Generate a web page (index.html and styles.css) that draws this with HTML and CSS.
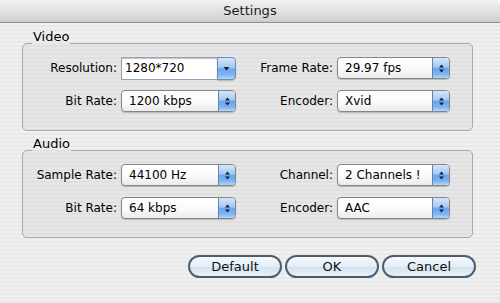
FILE: index.html
```html
<!DOCTYPE html>
<html lang="en">
<head>
  <meta charset="UTF-8">
  <meta name="viewport" content="width=device-width, initial-scale=1.0">
  <title>Settings</title>
  <link rel="stylesheet" href="styles.css">
</head>
<body>
  <div class="window">
    <div class="titlebar">Settings</div>
    <div class="content">
      <fieldset class="group">
        <legend>Video</legend>
        <div class="grid">
          <label class="field-label">Resolution:</label>
          <div class="combo">
            <span class="combo-text">1280*720</span>
            <span class="combo-btn"><svg width="7" height="11" viewBox="0 0 7 11"><polygon points="0.5,4 6.5,4 3.5,7.5" fill="#15203a"/></svg></span>
          </div>
          <label class="field-label">Frame Rate:</label>
          <div class="popup">
            <span class="popup-text">29.97 fps</span>
            <span class="popup-btn"><svg width="7" height="11" viewBox="0 0 7 11"><polygon points="1,4.5 6,4.5 3.5,1.5" fill="#15203a"/><polygon points="1,6.5 6,6.5 3.5,9.5" fill="#15203a"/></svg></span>
          </div>
          <label class="field-label">Bit Rate:</label>
          <div class="popup">
            <span class="popup-text">1200 kbps</span>
            <span class="popup-btn"><svg width="7" height="11" viewBox="0 0 7 11"><polygon points="1,4.5 6,4.5 3.5,1.5" fill="#15203a"/><polygon points="1,6.5 6,6.5 3.5,9.5" fill="#15203a"/></svg></span>
          </div>
          <label class="field-label">Encoder:</label>
          <div class="popup">
            <span class="popup-text">Xvid</span>
            <span class="popup-btn"><svg width="7" height="11" viewBox="0 0 7 11"><polygon points="1,4.5 6,4.5 3.5,1.5" fill="#15203a"/><polygon points="1,6.5 6,6.5 3.5,9.5" fill="#15203a"/></svg></span>
          </div>
        </div>
      </fieldset>
      <fieldset class="group">
        <legend>Audio</legend>
        <div class="grid">
          <label class="field-label">Sample Rate:</label>
          <div class="popup">
            <span class="popup-text">44100 Hz</span>
            <span class="popup-btn"><svg width="7" height="11" viewBox="0 0 7 11"><polygon points="1,4.5 6,4.5 3.5,1.5" fill="#15203a"/><polygon points="1,6.5 6,6.5 3.5,9.5" fill="#15203a"/></svg></span>
          </div>
          <label class="field-label">Channel:</label>
          <div class="popup">
            <span class="popup-text">2 Channels !</span>
            <span class="popup-btn"><svg width="7" height="11" viewBox="0 0 7 11"><polygon points="1,4.5 6,4.5 3.5,1.5" fill="#15203a"/><polygon points="1,6.5 6,6.5 3.5,9.5" fill="#15203a"/></svg></span>
          </div>
          <label class="field-label">Bit Rate:</label>
          <div class="popup">
            <span class="popup-text">64 kbps</span>
            <span class="popup-btn"><svg width="7" height="11" viewBox="0 0 7 11"><polygon points="1,4.5 6,4.5 3.5,1.5" fill="#15203a"/><polygon points="1,6.5 6,6.5 3.5,9.5" fill="#15203a"/></svg></span>
          </div>
          <label class="field-label">Encoder:</label>
          <div class="popup">
            <span class="popup-text">AAC</span>
            <span class="popup-btn"><svg width="7" height="11" viewBox="0 0 7 11"><polygon points="1,4.5 6,4.5 3.5,1.5" fill="#15203a"/><polygon points="1,6.5 6,6.5 3.5,9.5" fill="#15203a"/></svg></span>
          </div>
        </div>
      </fieldset>
      <div class="buttons">
        <button class="btn">Default</button>
        <button class="btn">OK</button>
        <button class="btn">Cancel</button>
      </div>
    </div>
  </div>
</body>
</html>
```

FILE: styles.css
```css
body { margin: 0; font-family: "DejaVu Sans", sans-serif; font-size: 12px; color: #000; background: #fff; }
.window { width: 500px; height: 303px; display: flex; flex-direction: column; overflow: hidden; }

.titlebar { height: 22px; line-height: 22px; text-align: center; font-size: 13px; color: #1a1a1a;
  background: linear-gradient(#f1f1f1, #e2e2e2 50%, #cdcdcd); border-bottom: 1px solid #8e8e8e;
  border-top-right-radius: 5px; }

.content { flex: 1; padding: 6px 24px 0 22px;
  background: repeating-linear-gradient(to bottom, #f0f0f0 0, #f0f0f0 2px, #e9e9e9 2px, #e9e9e9 4px); }

.group { margin: 0 3px 5px 0; padding: 0 0 18px; border: 1px solid #a9a9a9; border-radius: 5px;
  background: rgba(0, 0, 0, 0.035); min-width: 0; }
.group legend { margin-left: 9px; padding: 0 1px 12px; font-size: 13px; line-height: 16px; }

.grid { display: grid; grid-template-columns: 94px 115px 93px 113px; grid-auto-rows: 22px;
  column-gap: 4px; row-gap: 11px; align-items: center; }
.field-label { text-align: right; white-space: nowrap; }

.popup { height: 22px; box-sizing: border-box; display: flex; border: 1px solid #858585; border-radius: 4px;
  background: linear-gradient(#ffffff, #fbfbfb 50%, #ececec); box-shadow: 0 1px 1px rgba(0, 0, 0, 0.2); overflow: hidden; }
.popup-text { flex: 1; padding-left: 7px; line-height: 20px; white-space: nowrap; overflow: hidden; }
.popup-btn, .combo-btn { width: 16px; display: flex; align-items: center; justify-content: center;
  border-left: 1px solid #5c84b4;
  background: linear-gradient(#d4e6fa, #a3c8f2 45%, #6aa6ec 52%, #7cb4f2 80%, #b4d6f8); }

.combo { height: 23px; display: flex; }
.combo-text { flex: 1; box-sizing: border-box; padding-left: 3px; line-height: 21px; background: #fff;
  border: 1px solid #8fa3bd; border-right: 0; box-shadow: inset 0 1px 1px rgba(0, 0, 0, 0.25); }
.combo-btn { width: 17px; border: 1px solid #6a8cb6; border-radius: 0 4px 4px 0; box-shadow: 0 1px 1px rgba(0, 0, 0, 0.2); }

.buttons { display: flex; justify-content: flex-end; gap: 3px; margin-top: 17px; }
.btn { width: 94px; height: 23px; box-sizing: border-box; padding: 0; border: 2px solid #4a5e70; border-radius: 12px;
  font-family: inherit; font-size: 13px; color: #111;
  background: linear-gradient(#f6f9fc, #e4edf5 50%, #d2e2ef 52%, #e6f1fa); }
```
